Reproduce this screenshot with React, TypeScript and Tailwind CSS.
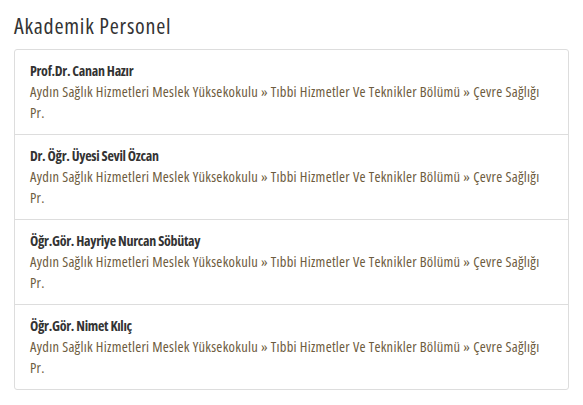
const people = [
  "Prof.Dr. Canan Hazır",
  "Dr. Öğr. Üyesi Sevil Özcan",
  "Öğr.Gör. Hayriye Nurcan Söbütay",
  "Öğr.Gör. Nimet Kılıç",
];

const unit =
  "Aydın Sağlık Hizmetleri Meslek Yüksekokulu » Tıbbi Hizmetler Ve Teknikler Bölümü » Çevre Sağlığı Pr.";

export default function App() {
  return (
    <div className="min-h-screen bg-white px-[14px] pt-[12px] text-[#333] [font-family:'Open_Sans',sans-serif] [font-stretch:75%]">
      <h2 className="mb-[11px] text-[22px] leading-[26px] tracking-[0.75px] text-[#333]">Akademik Personel</h2>

      <div className="w-[555px] rounded-[3px] border border-[#dddddd]">
        {people.map((name, i) => (
          <div
            key={name}
            className={`px-[15px] pt-[10px] pb-[11px] leading-[21px] ${
              i > 0 ? "border-t border-[#dddddd]" : ""
            }`}
          >
            <div className="text-[14px] font-bold tracking-[-0.3px] text-[#333]">{name}</div>
            <div className="text-[14.5px] tracking-[0.27px] text-[#6e5c3e]">{unit}</div>
          </div>
        ))}
      </div>
    </div>
  );
}
